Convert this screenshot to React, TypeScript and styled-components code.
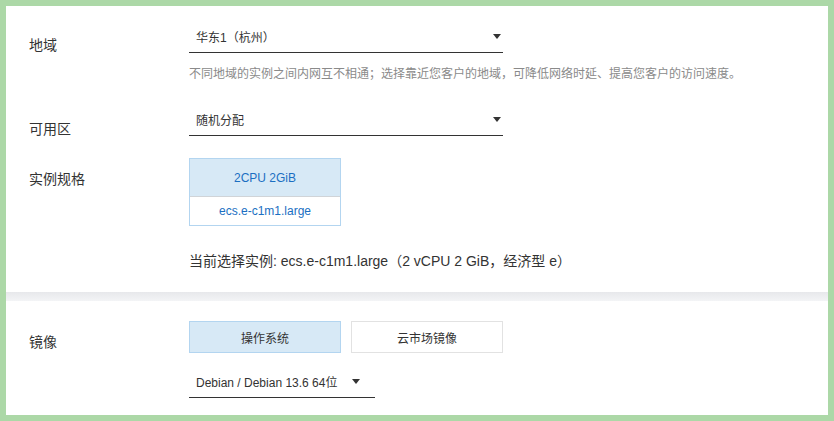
import * as React from 'react';
import styled, { createGlobalStyle } from 'styled-components';

const GlobalStyle = createGlobalStyle`
  html, body {
    margin: 0;
    padding: 0;
    background: #acd8a7;
  }
  body {
    font-family: "Liberation Sans", "Noto Sans CJK SC", sans-serif;
    color: #333;
  }
`;

const Frame = styled.div`
  box-sizing: border-box;
  width: 834px;
  height: 421px;
  border: 6px solid #acd8a7;
  background: #fff;
  display: flex;
  flex-direction: column;
`;

const Panel = styled.section<{ $top: number; $bottom: number }>`
  background: #fff;
  padding: ${p => p.$top}px 0 ${p => p.$bottom}px 23px;
  display: flex;
  flex-direction: column;
`;

const Band = styled.div`
  height: 9px;
  background: linear-gradient(#e7e8eb, #f3f4f6);
`;

const Row = styled.div<{ $gap?: number }>`
  display: grid;
  grid-template-columns: 160px 1fr;
  margin-top: ${p => p.$gap ?? 0}px;
`;

const Label = styled.div<{ $offset: number }>`
  font-size: 14px;
  line-height: 20px;
  padding-top: ${p => p.$offset}px;
  color: #333;
`;

const Field = styled.div`
  display: flex;
  flex-direction: column;
  align-items: flex-start;
`;

const SelectBox = styled.div<{ $width: number }>`
  box-sizing: border-box;
  width: ${p => p.$width}px;
  height: 32px;
  border-bottom: 1px solid #333;
  display: flex;
  align-items: center;
  padding: 0 2px 0 7px;
  font-size: 12px;
  color: #333;
`;

const SelectText = styled.span<{ $grow?: boolean }>`
  flex: ${p => (p.$grow ? 1 : '0 0 auto')};
  white-space: nowrap;
`;

const Caret = styled.span<{ $gap?: number }>`
  width: 0;
  height: 0;
  margin-left: ${p => p.$gap ?? 0}px;
  border-left: 4px solid transparent;
  border-right: 4px solid transparent;
  border-top: 5px solid #333;
`;

const Hint = styled.div`
  margin-top: 12px;
  font-size: 12px;
  line-height: 18px;
  color: #8a8a8a;
`;

const SpecCard = styled.div`
  width: 152px;
  box-sizing: border-box;
  border: 1px solid #b3d5f0;
  display: flex;
  flex-direction: column;
`;

const SpecHead = styled.div`
  height: 37px;
  background: #d7e9f6;
  border-bottom: 1px solid #d0d4d8;
  display: flex;
  align-items: center;
  justify-content: center;
  font-size: 12px;
  color: #1b6fc2;
`;

const SpecBody = styled.div`
  height: 28px;
  display: flex;
  align-items: center;
  justify-content: center;
  font-size: 12px;
  color: #1b6fc2;
`;

const Current = styled.div`
  margin-top: 25px;
  font-size: 14px;
  line-height: 20px;
  color: #333;
`;

const Tabs = styled.div`
  display: flex;
  gap: 10px;
`;

const Tab = styled.div<{ $active?: boolean }>`
  box-sizing: border-box;
  width: 152px;
  height: 32px;
  display: flex;
  align-items: center;
  justify-content: center;
  font-size: 12px;
  color: #333;
  background: ${p => (p.$active ? '#d7e9f6' : '#fff')};
  border: 1px solid ${p => (p.$active ? '#b3d5f0' : '#e2e2e2')};
`;

const ImageSelect = styled(SelectBox)`
  margin-top: 13px;
  padding-right: 14px;
`;

export default function App() {
  return (
    <>
      <GlobalStyle />
      <Frame>
        <Panel $top={15} $bottom={21}>
          <Row>
            <Label $offset={14}>地域</Label>
            <Field>
              <SelectBox $width={314}>
                <SelectText $grow>华东1（杭州）</SelectText>
                <Caret />
              </SelectBox>
              <Hint>不同地域的实例之间内网互不相通；选择靠近您客户的地域，可降低网络时延、提高您客户的访问速度。</Hint>
            </Field>
          </Row>
          <Row $gap={21}>
            <Label $offset={15}>可用区</Label>
            <Field>
              <SelectBox $width={314}>
                <SelectText $grow>随机分配</SelectText>
                <Caret />
              </SelectBox>
            </Field>
          </Row>
          <Row $gap={19}>
            <Label $offset={11}>实例规格</Label>
            <Field>
              <SpecCard>
                <SpecHead>2CPU 2GiB</SpecHead>
                <SpecBody>ecs.e-c1m1.large</SpecBody>
              </SpecCard>
              <Current>当前选择实例: ecs.e-c1m1.large（2 vCPU 2 GiB，经济型 e）</Current>
            </Field>
          </Row>
        </Panel>
        <Band />
        <Panel $top={20} $bottom={17}>
          <Row>
            <Label $offset={11}>镜像</Label>
            <Field>
              <Tabs>
                <Tab $active>操作系统</Tab>
                <Tab>云市场镜像</Tab>
              </Tabs>
              <ImageSelect $width={186}>
                <SelectText>Debian / Debian 13.6 64位</SelectText>
                <Caret $gap={15} />
              </ImageSelect>
            </Field>
          </Row>
        </Panel>
      </Frame>
    </>
  );
}
